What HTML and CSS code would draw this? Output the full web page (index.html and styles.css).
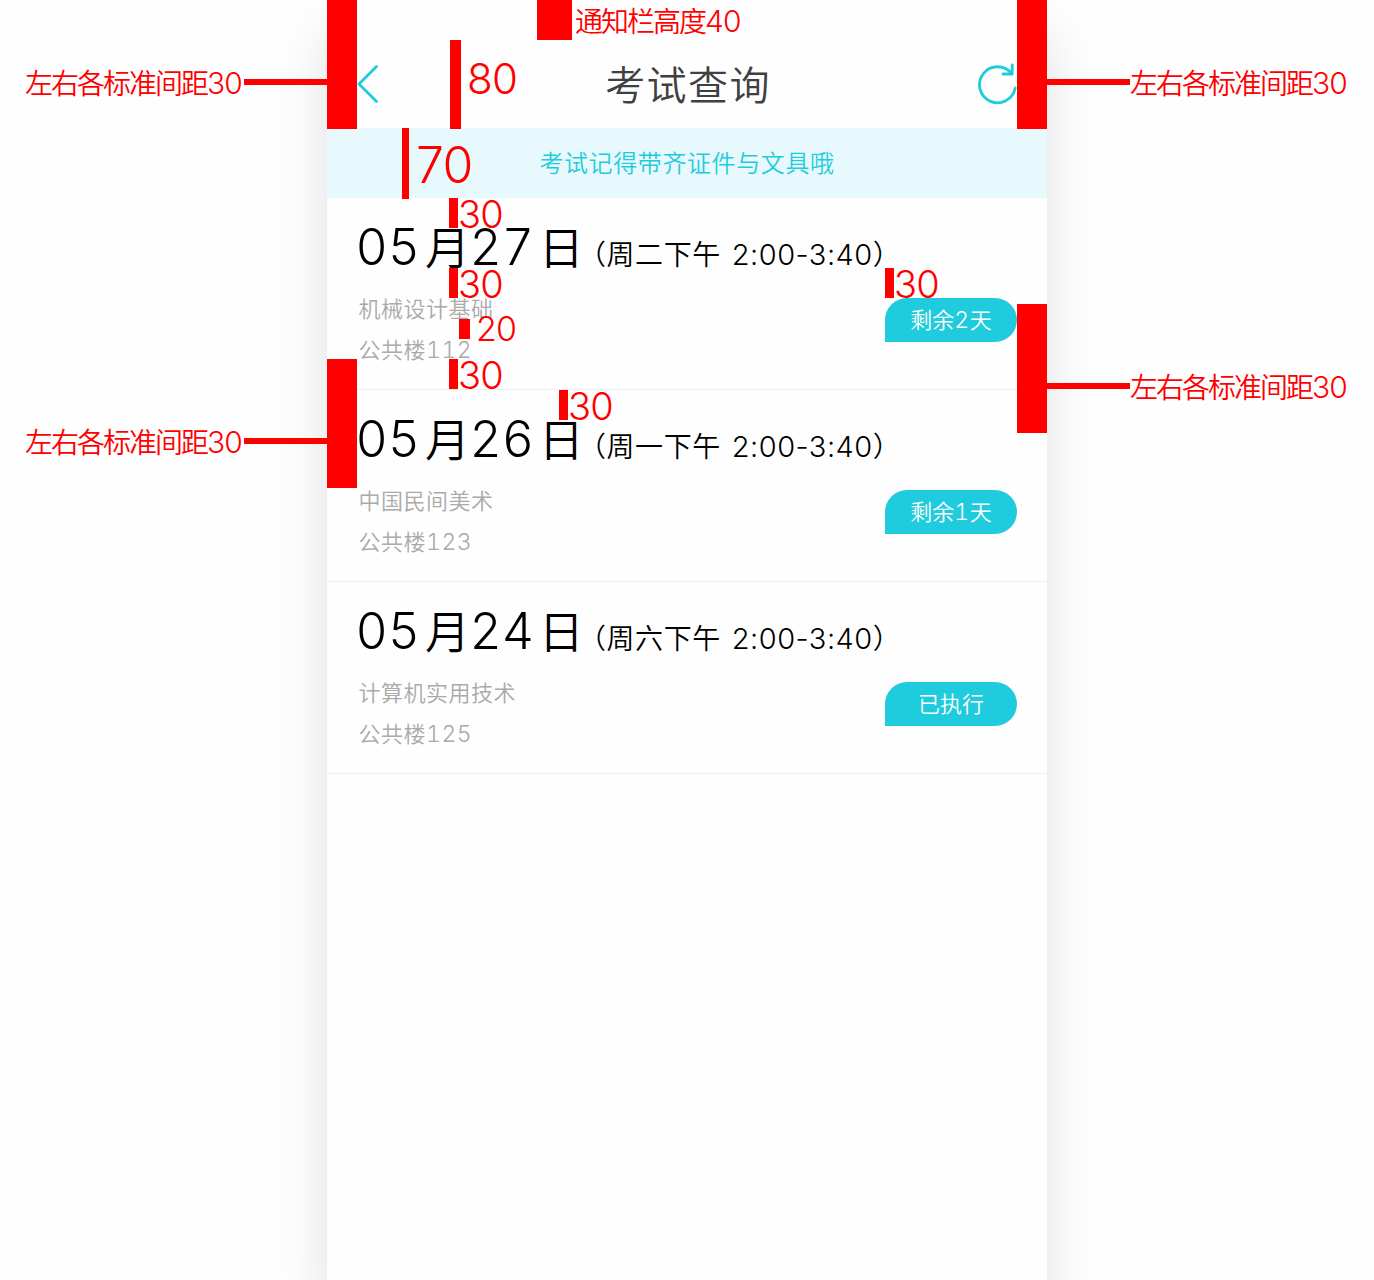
FILE: index.html
```
<!DOCTYPE html>
<html lang="zh-CN">
<head>
<meta charset="utf-8">
<title>考试查询</title>
<link rel="stylesheet" href="styles.css">
</head>
<body>
<main class="phone">
  <header class="navbar">
    <svg class="back" width="24" height="40" viewBox="0 0 24 40"><path d="M19.5 2.5 2 20 19.5 37.5"/></svg>
    <h1 class="title">考试查询</h1>
    <svg class="refresh" width="42" height="42" viewBox="0 0 42 42"><path d="M34.8 10.8A18 18 0 1 0 38.2 25"/><path d="M35.2 2V11H26"/></svg>
  </header>
  <p class="notice">考试记得带齐证件与文具哦</p>
  <section class="exam">
    <h2 class="when"><span class="num">05</span>月<span class="num">27</span>日<span class="time">（周二下午 <span class="clock">2:00-3:40</span>）</span></h2>
    <div class="detail">
      <div class="place"><p>机械设计基础</p><p>公共楼<span class="room">112</span></p></div>
      <span class="badge">剩余<span class="days">2</span>天</span>
    </div>
  </section>
  <section class="exam">
    <h2 class="when"><span class="num">05</span>月<span class="num">26</span>日<span class="time">（周一下午 <span class="clock">2:00-3:40</span>）</span></h2>
    <div class="detail">
      <div class="place"><p>中国民间美术</p><p>公共楼<span class="room">123</span></p></div>
      <span class="badge">剩余<span class="days">1</span>天</span>
    </div>
  </section>
  <section class="exam">
    <h2 class="when"><span class="num">05</span>月<span class="num">24</span>日<span class="time">（周六下午 <span class="clock">2:00-3:40</span>）</span></h2>
    <div class="detail">
      <div class="place"><p>计算机实用技术</p><p>公共楼<span class="room">125</span></p></div>
      <span class="badge">已执行</span>
    </div>
  </section>
</main>
<div class="specs">
  <i class="bar edge-tl"></i><i class="bar edge-tr"></i><i class="bar edge-r"></i><i class="bar edge-l"></i>
  <i class="bar lead-tl"></i><i class="bar lead-tr"></i><i class="bar lead-r"></i><i class="bar lead-l"></i>
  <i class="bar status"></i><i class="bar nav"></i><i class="bar tip"></i>
  <i class="bar gap-a"></i><i class="bar gap-b"></i><i class="bar gap-c"></i><i class="bar gap-d"></i><i class="bar gap-e"></i><i class="bar gap-f"></i>
  <span class="note note-tl">左右各标准间距<b>30</b></span>
  <span class="note note-tr">左右各标准间距<b>30</b></span>
  <span class="note note-l">左右各标准间距<b>30</b></span>
  <span class="note note-r">左右各标准间距<b>30</b></span>
  <span class="note note-status">通知栏高度<b>40</b></span>
  <span class="size size-nav">80</span>
  <span class="size size-tip">70</span>
  <span class="size size-a">30</span>
  <span class="size size-b">30</span>
  <span class="size size-c">20</span>
  <span class="size size-d">30</span>
  <span class="size size-e">30</span>
  <span class="size size-f">30</span>
</div>
</body>
</html>
```

FILE: styles.css
```
* { box-sizing: border-box; }
body {
  position: relative;
  margin: 0;
  height: 1280px;
  overflow: hidden;
  background: #fefefe;
  font-family: "Noto Sans CJK SC", sans-serif;
  font-weight: 350;
}
h1, h2, p { margin: 0; font-weight: 350; }
svg { fill: none; stroke: #1fccdd; stroke-width: 2.8; stroke-linecap: round; stroke-linejoin: round; }

.phone {
  width: 720px;
  height: 1280px;
  margin: 0 auto;
  background: #fefefe;
  box-shadow: 0 34px 50px rgba(0, 0, 0, .12);
}
.navbar {
  display: grid;
  grid-template-columns: 42px 1fr 42px;
  align-items: center;
  height: 128px;
  padding: 40px 28px 0 30px;
}
.title {
  padding-bottom: 2px;
  font-size: 40px;
  line-height: 78px;
  letter-spacing: 1.4px;
  text-align: center;
  color: #404040;
}
.notice {
  height: 70px;
  background: #e7f9fc;
  color: #1fccdd;
  font-size: 24px;
  line-height: 68px;
  letter-spacing: .6px;
  text-align: center;
}
.exam {
  height: 192px;
  padding: 17px 30px 0;
  border-bottom: 1px solid #eee;
}
.when {
  height: 61px;
  font-size: 45px;
  line-height: 61px;
  letter-spacing: 1px;
  color: #000;
  white-space: nowrap;
}
.num, .clock, .room, .days, .note b, .size { font-family: Inter, sans-serif; font-weight: 300; }
.num { margin: 0 5px 0 -1.4px; font-size: 50px; letter-spacing: -.2px; }
.num, .room, .days { font-variant-numeric: tabular-nums; }
.time { margin-left: -7px; font-size: 28px; letter-spacing: .6px; }
.clock { margin-left: 4px; font-size: 29px; letter-spacing: .5px; }
.detail { display: flex; justify-content: space-between; padding-top: 11px; }
.place { padding-left: 1.6px; font-size: 22px; line-height: 41px; letter-spacing: .5px; color: #aaa; }
.room { font-size: 23px; }
.days { font-size: 23px; letter-spacing: .8px; }
.badge {
  width: 132px;
  height: 44px;
  margin-top: 11px;
  border-radius: 22px 22px 22px 0;
  background: #1fccdd;
  color: #fff;
  font-size: 22px;
  line-height: 41px;
  text-align: center;
}

.specs { position: absolute; inset: 0; color: #f00; }
.bar, .note, .size { position: absolute; white-space: nowrap; }
.bar { background: #f00; }
.edge-tl { left: 327px; top: 0; width: 30px; height: 129px; }
.edge-tr { left: 1017px; top: 0; width: 30px; height: 129px; }
.edge-r { left: 1017px; top: 304px; width: 30px; height: 129px; }
.edge-l { left: 327px; top: 359px; width: 30px; height: 129px; }
.lead-tl { left: 244px; top: 79px; width: 83px; height: 6px; }
.lead-tr { left: 1047px; top: 79px; width: 83px; height: 6px; }
.lead-r { left: 1047px; top: 383px; width: 83px; height: 6px; }
.lead-l { left: 244px; top: 438px; width: 83px; height: 6px; }
.status { left: 537px; top: 0; width: 35px; height: 40px; }
.nav { left: 450px; top: 40px; width: 11px; height: 89px; }
.tip { left: 402px; top: 128px; width: 7px; height: 71px; }
.gap-a { left: 449px; top: 198px; width: 9px; height: 30px; }
.gap-b { left: 449px; top: 268px; width: 9px; height: 30px; }
.gap-c { left: 459px; top: 319px; width: 11px; height: 20px; }
.gap-d { left: 449px; top: 359px; width: 9px; height: 30px; }
.gap-e { left: 559px; top: 390px; width: 9px; height: 30px; }
.gap-f { left: 885px; top: 268px; width: 9px; height: 30px; }

.note { font-size: 28px; line-height: 40px; letter-spacing: -2px; }
.note b { font-size: 30px; letter-spacing: -1px; }
.note-tl { left: 25px; top: 62px; }
.note-tr { left: 1130px; top: 62px; }
.note-l { left: 25px; top: 421px; }
.note-r { left: 1130px; top: 366px; }
.note-status { left: 575px; top: 0; }
.size { font-size: 38px; line-height: 40px; letter-spacing: -.8px; }
.size-nav { left: 467px; top: 59px; font-size: 42px; }
.size-tip { left: 416px; top: 145px; font-size: 50px; }
.size-a { left: 458px; top: 194px; }
.size-b { left: 458px; top: 264px; }
.size-c { left: 476px; top: 309px; font-size: 34px; }
.size-d { left: 458px; top: 355px; }
.size-e { left: 568px; top: 386px; }
.size-f { left: 894px; top: 264px; }
```
